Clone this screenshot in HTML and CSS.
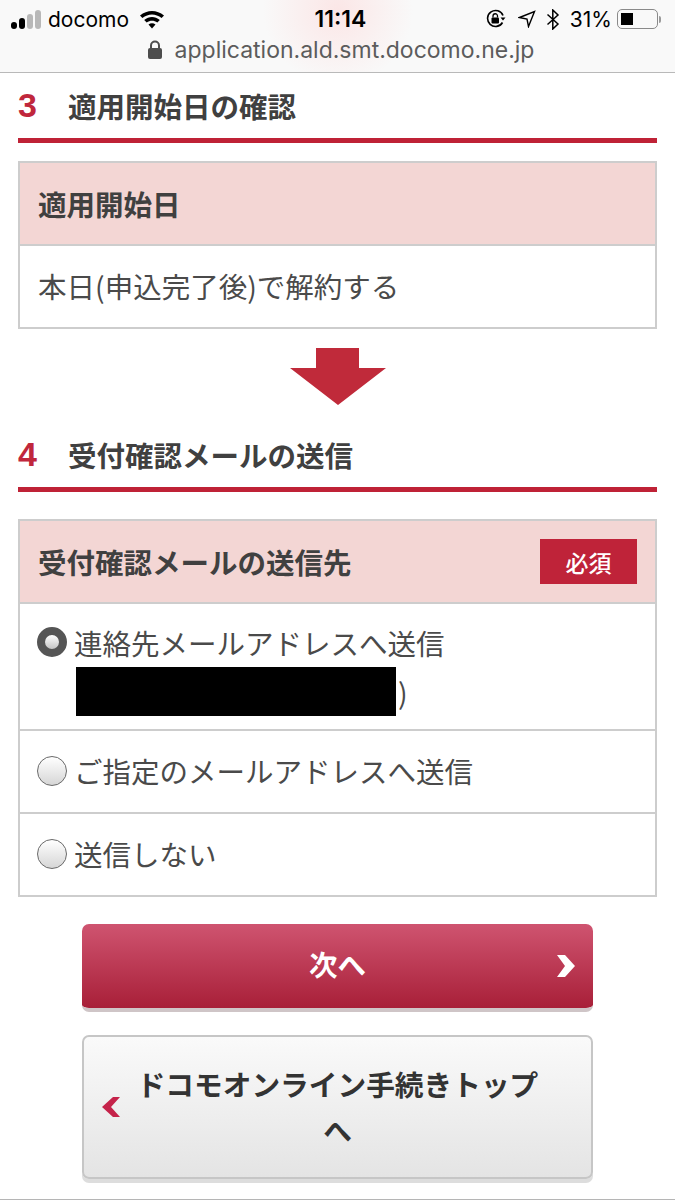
FILE: index.html
```html
<!DOCTYPE html>
<html lang="ja">
<head>
    <meta charset="UTF-8">
    <meta name="viewport" content="width=device-width, initial-scale=1.0">
    <title>ドコモオンライン手続き</title>
    <link rel="stylesheet" href="styles.css">
</head>
<body>
    <div class="browser-bar">
        <div class="status-row">
            <div class="status-left">
                <div class="signal">
                    <span class="bar b1"></span>
                    <span class="bar b2"></span>
                    <span class="bar b3"></span>
                    <span class="bar b4"></span>
                </div>
                <span class="carrier">docomo</span>
                <svg class="wifi" width="26" height="20" viewBox="0 0 26 20">
                    <path d="M1 6.5C8 .5 18 .5 25 6.5l-2.4 2.6C16.700 4.200 9.300 4.200 3.400 9.100z" fill="#000"/>
                    <path d="M5.200 11C10 7 16 7 20.800 11l-2.500 2.600C15 11 11 11 7.700 13.600z" fill="#000"/>
                    <path d="M9.500 15.400c2.200-1.600 4.800-1.600 7 0L13 19.500z" fill="#000"/>
                </svg>
            </div>
            <div class="status-time">11:14</div>
            <div class="status-right">
                <svg width="22" height="20" viewBox="0 0 22 20">
                    <path d="M17.500 13.500A8 8 0 1 1 18 6.500" fill="none" stroke="#000" stroke-width="1.600"/>
                    <path d="M15.500 8.500h5l-2.500 3z" fill="#000"/>
                    <rect x="6.500" y="8.500" width="7.500" height="6" rx="1" fill="#000"/>
                    <path d="M8 8.500V7a2.200 2.200 0 0 1 4.500 0v1.500" fill="none" stroke="#000" stroke-width="1.300"/>
                </svg>
                <svg class="gap-a" width="18" height="18" viewBox="0 0 18 18">
                    <path d="M1.500 7.500 16.500 1.500 10.500 16.500 9 9z" fill="none" stroke="#000" stroke-width="1.400" stroke-linejoin="miter"/>
                </svg>
                <svg class="gap-b" width="14" height="21" viewBox="0 0 14 21">
                    <path d="M1.500 5.500 12 15 6.800 20V1L12 6 1.500 15.500" fill="none" stroke="#000" stroke-width="1.500"/>
                </svg>
                <span class="battery-text">31%</span>
                <div class="battery">
                    <div class="battery-fill"></div>
                </div>
                <div class="battery-nub"></div>
            </div>
        </div>
        <div class="url-row">
            <svg width="16" height="20" viewBox="0 0 16 20">
                <rect x="1" y="8" width="14" height="11" rx="2" fill="#4d4d4d"/>
                <path d="M4 9V5.500a4 4 0 0 1 8 0V9" fill="none" stroke="#4d4d4d" stroke-width="2"/>
            </svg>
            <span class="url-text">application.ald.smt.docomo.ne.jp</span>
        </div>
    </div>

    <div class="section-head">
        <span class="section-num">3</span>
        <h2 class="section-title">適用開始日の確認</h2>
    </div>
    <div class="panel">
        <div class="panel-head">適用開始日</div>
        <div class="panel-row">本日(申込完了後)で解約する</div>
    </div>

    <div class="arrow-wrap">
        <svg width="96" height="57" viewBox="0 0 96 57">
            <path d="M26 0h43v20h27L48 57 0 20h26z" fill="#c02a3a"/>
        </svg>
    </div>

    <div class="section-head section-head-second">
        <span class="section-num">4</span>
        <h2 class="section-title">受付確認メールの送信</h2>
    </div>
    <div class="panel">
        <div class="panel-head">
            <span>受付確認メールの送信先</span>
            <span class="required">必須</span>
        </div>
        <div class="panel-row option option-first">
            <span class="radio radio-on"></span>
            <div class="option-text">
                <div>連絡先メールアドレスへ送信</div>
                <div class="masked-line"><span class="masked"></span>)</div>
            </div>
        </div>
        <div class="panel-row option">
            <span class="radio"></span>
            <div class="option-text">ご指定のメールアドレスへ送信</div>
        </div>
        <div class="panel-row option">
            <span class="radio"></span>
            <div class="option-text">送信しない</div>
        </div>
    </div>

    <div class="buttons">
        <button class="btn btn-next">
            次へ
            <svg class="btn-icon icon-next" width="20" height="22" viewBox="0 0 20 22">
                <path d="M1 0h8l10 11-10 11H1l8-11z" fill="#fff"/>
            </svg>
        </button>
        <button class="btn btn-top">
            <svg class="btn-icon icon-top" width="20" height="22" viewBox="0 0 20 22">
                <path d="M19 1h-7L1 11l11 10h7l-9-10z" fill="#c5234a"/>
            </svg>
            ドコモオンライン手続きトップへ
        </button>
    </div>
    <div class="bottom-line"></div>
</body>
</html>
```

FILE: styles.css
```css
* {
    margin: 0;
    padding: 0;
    box-sizing: border-box;
}

body {
    font-family: "Noto Sans CJK JP", "Noto Sans", sans-serif;
    background: white;
    color: #444;
    height: 1200px;
    overflow: hidden;
}

.browser-bar {
    height: 73px;
    border-bottom: 1px solid #b9b9b9;
    background: radial-gradient(ellipse 75px 75px at 338px 10px, #fbe6e6 0%, #f9f9f9 100%);
    font-family: "Inter", "Liberation Sans", sans-serif;
}

.status-row {
    display: grid;
    grid-template-columns: 1fr auto 1fr;
    align-items: center;
    height: 38px;
    color: #000;
}

.status-left {
    display: flex;
    align-items: center;
    padding-left: 11px;
}

.signal {
    display: flex;
    align-items: flex-end;
    gap: 2px;
    height: 19px;
    margin-top: 1px;
}

.bar {
    width: 6px;
    border-radius: 3px;
}

.b1 {
    height: 7px;
    background: #000;
}

.b2 {
    height: 11px;
    background: #000;
}

.b3 {
    height: 15px;
    background: #b8b8b8;
}

.b4 {
    height: 19px;
    background: #b8b8b8;
}

.carrier {
    font-size: 21px;
    margin-left: 7px;
}

.wifi {
    margin-left: 10px;
}

.status-time {
    font-size: 23px;
    font-weight: 600;
    padding-left: 6px;
}

.status-right {
    display: flex;
    align-items: center;
    justify-content: flex-end;
    padding-right: 14px;
}

.gap-a {
    margin-left: 11px;
}

.gap-b {
    margin-left: 10px;
}

.battery-text {
    font-size: 21px;
    margin-left: 10px;
}

.battery {
    width: 41px;
    height: 20px;
    margin-left: 5px;
    padding: 3px;
    border: 1.5px solid #8a8a8a;
    border-radius: 5px;
}

.battery-fill {
    width: 12px;
    height: 100%;
    background: #000;
}

.battery-nub {
    width: 2px;
    height: 7px;
    margin-left: 1px;
    background: #9a9a9a;
    border-radius: 0 2px 2px 0;
}

.url-row {
    display: flex;
    align-items: center;
    justify-content: center;
    gap: 12px;
    height: 24px;
    padding-left: 6px;
    color: #5c5c5c;
}

.url-text {
    font-size: 23px;
}

.section-head {
    display: flex;
    align-items: center;
    height: 70px;
    margin: 0 18px 18px;
    border-bottom: 5px solid #bf2236;
}

.section-head-second {
    margin-top: 17px;
    margin-bottom: 27px;
}

.section-num {
    width: 50px;
    font-family: "Liberation Sans", sans-serif;
    font-size: 34px;
    font-weight: 700;
    color: #c0273c;
}

.section-title {
    font-size: 28.5px;
    font-weight: 700;
    color: #404040;
}

.panel {
    margin: 0 18px;
    border: 2px solid #cdcdcd;
}

.panel-head {
    display: flex;
    align-items: center;
    justify-content: space-between;
    height: 81px;
    padding: 0 18px;
    background: #f3d6d4;
    font-size: 28.5px;
    font-weight: 700;
    color: #404040;
}

.panel-row {
    display: flex;
    align-items: center;
    height: 83px;
    padding: 0 18px 2px;
    border-top: 2px solid #cdcdcd;
    font-size: 28.5px;
    color: #4a4a4a;
}

.required {
    display: flex;
    align-items: center;
    justify-content: center;
    width: 97px;
    height: 45px;
    background: #bf2339;
    color: white;
    font-size: 23px;
    font-weight: 500;
}

.option {
    padding-left: 17px;
}

.option-first {
    align-items: flex-start;
    height: 127px;
    padding-top: 15px;
}

.option-text {
    line-height: 48px;
    margin-left: 7px;
}

.masked-line {
    display: flex;
    align-items: center;
    height: 49px;
}

.masked {
    width: 320px;
    height: 49px;
    margin-left: 2px;
    margin-right: 2px;
    background: #000;
}

.radio {
    flex: none;
    width: 30px;
    height: 30px;
    border: 1.5px solid #6a6a6a;
    border-radius: 50%;
    background: linear-gradient(#ffffff, #d6d6d6);
}

.radio-on {
    margin-top: 8px;
    border: 8px solid #555;
    background: linear-gradient(#ffffff, #c4c4c4);
}

.arrow-wrap {
    display: flex;
    justify-content: center;
    height: 57px;
    margin-top: 19px;
}

.buttons {
    display: flex;
    flex-direction: column;
    gap: 23px;
    margin: 27px 82px 0;
}

.btn {
    position: relative;
    width: 100%;
    border-radius: 7px;
    font-family: inherit;
    font-size: 28.5px;
    font-weight: 700;
}

.btn-next {
    height: 88px;
    padding-bottom: 6px;
    border: none;
    border-bottom: 4px solid #cfc5c7;
    background: linear-gradient(#cf5470 0%, #a81f38 100%);
    background-clip: padding-box;
    color: white;
}

.btn-top {
    height: 144px;
    padding: 0 50px;
    font-size: 28.7px;
    line-height: 46px;
    border: 2px solid #c6c6c6;
    box-shadow: 0 4px 0 #dddddd;
    background: linear-gradient(#fafafa 0%, #e4e4e4 100%);
    color: #333;
}

/* chevrons lie over the button face */
.btn-icon {
    position: absolute;
    top: 50%;
}

.icon-next {
    right: 17px;
    margin-top: -11px;
}

.icon-top {
    left: 17px;
    margin-top: -11px;
}

.bottom-line {
    position: absolute;
    left: 0;
    right: 0;
    top: 1199px;
    height: 1px;
    background: #b5b5b5;
}
```
